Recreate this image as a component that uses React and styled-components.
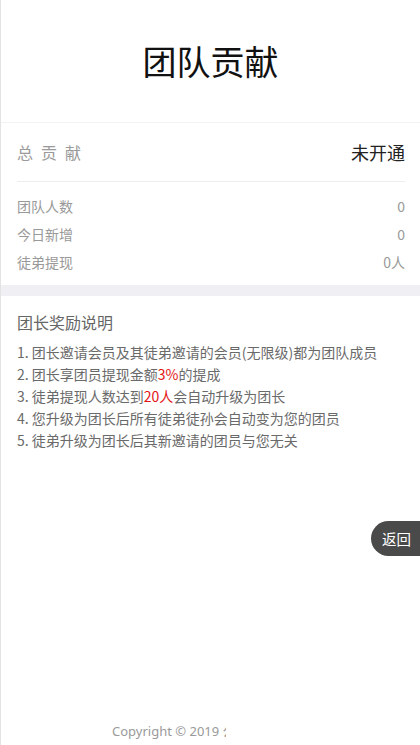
import React from "react";
import styled, { createGlobalStyle } from "styled-components";

const Global = createGlobalStyle`
  html, body { margin: 0; padding: 0; background: #fff; }
  body { font-family: "Noto Sans", "Noto Sans CJK SC", sans-serif; }
  * { box-sizing: border-box; }
`;

const Page = styled.div`
  position: relative;
  min-height: 745px;
  border-left: 1px solid #e3e3e3;
  display: flex;
  flex-direction: column;
  font-family: "Noto Sans", "Noto Sans CJK SC", sans-serif;
`;

const Header = styled.header`
  height: 123px;
  display: flex;
  align-items: center;
  justify-content: center;
  border-bottom: 1px solid #f2f2f2;
`;

const Title = styled.h1`
  margin: 0;
  font-size: 34px;
  font-weight: 400;
  color: #111;
  line-height: 1;
  font-family: "Noto Sans CJK SC", sans-serif;
`;

const Summary = styled.section`
  padding: 0 15px 0 16px;
`;

const TotalRow = styled.div`
  height: 59px;
  display: flex;
  align-items: center;
  justify-content: space-between;
  border-bottom: 1px solid #eeeeee;
`;

const TotalLabel = styled.span`
  font-size: 16px;
  color: #9a9a9a;
  letter-spacing: 8px;
  font-family: "Noto Sans CJK SC", sans-serif;
`;

const TotalValue = styled.span`
  font-size: 18px;
  color: #222;
  font-family: "Noto Sans CJK SC", sans-serif;
`;

const StatList = styled.div`
  padding: 10px 0 9px;
`;

const StatRow = styled.div`
  height: 28px;
  display: flex;
  align-items: center;
  justify-content: space-between;
  font-size: 14px;
  color: #999;
  font-family: "Noto Sans CJK SC", sans-serif;
`;

const Band = styled.div`
  height: 11px;
  background: #efeff4;
`;

const Rules = styled.section`
  padding: 14px 16px 0;
`;

const RulesTitle = styled.h2`
  margin: 0 0 7px;
  font-size: 16px;
  line-height: 24px;
  font-weight: 400;
  color: #666;
  font-family: "Noto Sans CJK SC", sans-serif;
`;

const RuleList = styled.ol`
  margin: 0;
  padding: 0;
  list-style: none;
`;

const RuleItem = styled.li`
  font-size: 14px;
  line-height: 22px;
  color: #6a6a6a;
  font-family: "Noto Sans CJK SC", sans-serif;
`;

const Red = styled.span`
  color: #e41414;
`;

const Spacer = styled.div`
  flex: 1;
`;

const Footer = styled.footer`
  padding: 0 0 4px 111px;
`;

const FooterClip = styled.div`
  width: 114px;
  overflow: hidden;
  white-space: nowrap;
  font-size: 13px;
  line-height: 20px;
  color: #9a9a9a;
`;

const BackButton = styled.button`
  position: absolute;
  right: 0;
  top: 521px;
  width: 49px;
  height: 35px;
  padding: 0 0 0 2px;
  border: none;
  border-radius: 17.5px 0 0 17.5px;
  background: #4a4a4a;
  color: #fff;
  font-size: 14.5px;
  font-family: "Noto Sans CJK SC", sans-serif;
  display: flex;
  align-items: center;
  justify-content: center;
  cursor: pointer;
`;

const stats = [
  ["团队人数", "0"],
  ["今日新增", "0"],
  ["徒弟提现", "0人"],
];

export default function App() {
  return (
    <>
      <Global />
      <Page>
        <Header>
          <Title>团队贡献</Title>
        </Header>
        <Summary>
          <TotalRow>
            <TotalLabel>总贡献</TotalLabel>
            <TotalValue>未开通</TotalValue>
          </TotalRow>
          <StatList>
            {stats.map(([k, v]) => (
              <StatRow key={k}>
                <span>{k}</span>
                <span>{v}</span>
              </StatRow>
            ))}
          </StatList>
        </Summary>
        <Band />
        <Rules>
          <RulesTitle>团长奖励说明</RulesTitle>
          <RuleList>
            <RuleItem>1. 团长邀请会员及其徒弟邀请的会员(无限级)都为团队成员</RuleItem>
            <RuleItem>
              2. 团长享团员提现金额<Red>3%</Red>的提成
            </RuleItem>
            <RuleItem>
              3. 徒弟提现人数达到<Red>20人</Red>会自动升级为团长
            </RuleItem>
            <RuleItem>4. 您升级为团长后所有徒弟徒孙会自动变为您的团员</RuleItem>
            <RuleItem>5. 徒弟升级为团长后其新邀请的团员与您无关</RuleItem>
          </RuleList>
        </Rules>
        <Spacer />
        <Footer>
          <FooterClip>Copyright © 2019 公司 All Rights Reserved</FooterClip>
        </Footer>
        <BackButton>返回</BackButton>
      </Page>
    </>
  );
}
